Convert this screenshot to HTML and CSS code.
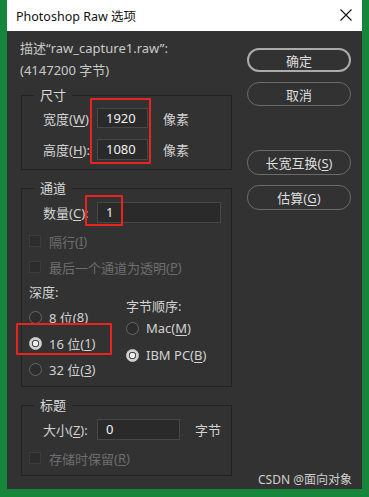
FILE: index.html
```html
<!DOCTYPE html>
<html lang="zh-CN">
<head>
    <meta charset="UTF-8">
    <title>Photoshop Raw 选项</title>
    <link rel="stylesheet" href="styles.css">
</head>
<body>
    <div class="window">
        <div class="titlebar">
            <span class="title">Photoshop Raw 选项</span>
            <svg class="close" width="12" height="12" viewBox="0 0 12 12"><path d="M0.5 0.5L11.5 11.5M11.5 0.5L0.5 11.5" stroke="#111" stroke-width="1.1" fill="none"/></svg>
        </div>
        <div class="content">
            <div class="left">
                <div class="desc">描述“raw_capture1.raw”:</div>
                <div class="desc">(4147200 字节)</div>

                <fieldset class="group size">
                    <legend>尺寸</legend>
                    <div class="row">
                        <label class="lbl">宽度(<u>W</u>)</label>
                        <div class="input small">1920</div>
                        <span class="unit">像素</span>
                    </div>
                    <div class="row second">
                        <label class="lbl">高度(<u>H</u>):</label>
                        <div class="input small">1080</div>
                        <span class="unit">像素</span>
                    </div>
                </fieldset>

                <fieldset class="group channel">
                    <legend>通道</legend>
                    <div class="row">
                        <label class="lbl">数量(<u>C</u>):</label>
                        <div class="input wide">1</div>
                    </div>
                    <div class="check disabled first"><span class="box"></span>隔行(<u>I</u>)</div>
                    <div class="check disabled"><span class="box"></span>最后一个通道为透明(<u>P</u>)</div>
                    <div class="cols">
                        <div class="col depth">
                            <div class="cap">深度:</div>
                            <div class="radio"><span class="dot"></span>8 位(<u>8</u>)</div>
                            <div class="radio"><span class="dot on"></span>16 位(<u>1</u>)</div>
                            <div class="radio"><span class="dot"></span>32 位(<u>3</u>)</div>
                        </div>
                        <div class="col order">
                            <div class="cap">字节顺序:</div>
                            <div class="radio mac"><span class="dot"></span>Mac(<u>M</u>)</div>
                            <div class="radio ibm"><span class="dot on"></span>IBM PC(<u>B</u>)</div>
                        </div>
                    </div>
                </fieldset>

                <fieldset class="group header">
                    <legend>标题</legend>
                    <div class="row">
                        <label class="lbl">大小(<u>Z</u>):</label>
                        <div class="input mid">0</div>
                        <span class="unit">字节</span>
                    </div>
                    <div class="check disabled"><span class="box"></span>存储时保留(<u>R</u>)</div>
                </fieldset>
            </div>
            <div class="right">
                <div class="btn default">确定</div>
                <div class="btn">取消</div>
                <div class="btn swap">长宽互换(<u>S</u>)</div>
                <div class="btn">估算(<u>G</u>)</div>
            </div>
        </div>

        <div class="mark m1"></div>
        <div class="mark m2"></div>
        <div class="mark m3"></div>
        <div class="watermark">CSDN @面向对象</div>
    </div>
</body>
</html>
```

FILE: styles.css
```css
*{margin: 0;padding: 0;box-sizing: border-box;}
body{background: #16873a; width: 369px; height: 497px; overflow: hidden; font-family: "Noto Sans", "Noto Sans CJK SC", sans-serif; font-size: 13px; color: #d2d2d2;}
u{text-underline-offset: 2px;}

.window{position: relative; margin-left: 7px; width: 355px; height: 489px; background: #323232;}
.titlebar{height: 31px; background: #fff; display: flex; align-items: center; justify-content: space-between; padding: 0 10px 1px 9px;}
.title{color: #111; font-size: 12.5px;}
.close{margin-top: -1px;}

.content{display: flex; padding: 6px 0 0 14px;}
.left{width: 211px;}
.desc{height: 22px; line-height: 22px; color: #c9c9c9; margin-left: -1px;}

.group{border: 1px solid #222; min-inline-size: 0; margin-top: 9px;}
.group legend{margin-left: 12px; padding: 0 6px; height: 18px; line-height: 18px; color: #dadada;}
.size{margin-top: 5px; padding-bottom: 9px;}
.channel{padding-bottom: 4px;}
.header{padding-bottom: 4px;}

.row{display: flex; align-items: center; margin-top: 4px; height: 20px;}
.row.second{margin-top: 11px; height: 21px;}
.channel .row, .header .row{margin-top: 5px; height: 21px;}
.lbl{width: 71px; padding-left: 21px; white-space: nowrap;}
.input{margin-left: 4px; height: 100%; background: #2a2a2a; border: 1px solid #474747; color: #f2f2f2; padding-left: 8px; line-height: 18px;}
.small{width: 51px;}
.wide{width: 124px;}
.mid{width: 83px;}
.unit{margin-left: 15px;}

.check{display: flex; align-items: center; height: 26px; padding-left: 7px;}
.check.first{margin-top: 5px;}
.check .box{width: 12px; height: 12px; background: #2c2c2c; border: 1px solid #3c3c3c; margin-right: 8px;}
.disabled{color: #6e6e6e;}
.header .check{margin-top: 5px;}

.cols{display: flex;}
.col{display: flex; flex-direction: column;}
.depth{width: 104px; padding-left: 7px;}
.order{padding-top: 15px;}
.cap{height: 24px; line-height: 24px;}
.order .cap{height: 22px; line-height: 22px;}
.radio{display: flex; align-items: center; height: 26px;}
.radio.mac{height: 22px;}
.radio.ibm{height: 32px;}
.dot{width: 13px; height: 13px; border-radius: 50%; border: 1px solid #676767; background: #2d2d2d; margin-right: 7px;}
.dot.on{border-color: #cfcfcf; background: radial-gradient(circle, #ececec 0 2.5px, #4b4b4b 3px 3.5px, #cfcfcf 4px);}

.right{display: flex; flex-direction: column; margin-left: 15px; padding-top: 11px;}
.btn{width: 104px; height: 24px; border: 1.5px solid #6b6b6b; border-radius: 12px; display: flex; align-items: center; justify-content: center; color: #dedede; margin-bottom: 10px;}
.btn.default{border: 2px solid #ababab;}
.btn.swap{margin-top: 34px; height: 25px;}
.btn:last-child{height: 25px;}

.mark{position: absolute; border: 2px solid #e8241c; border-radius: 1px;}
.m1{left: 83px; top: 98px; width: 61px; height: 66px;}
.m2{left: 78px; top: 195px; width: 38px; height: 31px;}
.m3{left: 9px; top: 323px; width: 96px; height: 32px;}

.watermark{position: absolute; right: 10px; bottom: 1px; font-size: 12px; color: #d0d0d0; line-height: 16px;}
```
